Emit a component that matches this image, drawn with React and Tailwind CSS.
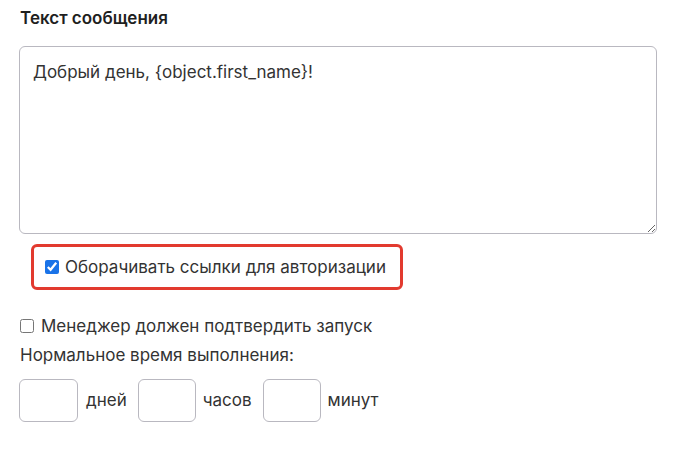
import React from "react";

export default function App() {
  return (
    <div className="w-[678px] h-[457px] bg-white pl-[19px] pr-[21px] pt-[7px] text-[#333333]" style={{ fontFamily: "Inter, 'Noto Sans', sans-serif" }}>
      <div className="text-[17px] font-semibold text-[#1f1f1f] leading-[22px] pl-[1px]">Текст сообщения</div>
      <textarea
        className="mt-[17px] block w-[638px] h-[188px] border border-[#b9b8c0] rounded-[6px] px-[13px] py-[13px] text-[17px] leading-[24px] text-[#333333] resize-y outline-none"
        style={{ fontFamily: "Inter, 'Noto Sans', sans-serif" }}
        defaultValue="Добрый день, {object.first_name}!"
      />
      <div className="mt-[10px] ml-[12px] w-[372px] h-[46px] border-[3px] border-[#e23a2f] rounded-[6px] flex items-center pl-[11px]">
        <input type="checkbox" defaultChecked className="w-[14px] h-[14px] m-0 accent-[#1a73e8]" />
        <span className="ml-[6px] text-[17px] leading-[20px]">Оборачивать ссылки для авторизации</span>
      </div>
      <div className="mt-[26px] flex items-center pl-[1px]">
        <input type="checkbox" className="w-[14px] h-[14px] m-0" />
        <span className="ml-[7px] text-[17px] leading-[20px]">Менеджер должен подтвердить запуск</span>
      </div>
      <div className="mt-[9px] text-[17px] leading-[20px] pl-[1px]">Нормальное время выполнения:</div>
      <div className="mt-[14px] flex items-center">
        <input type="text" className="w-[59px] h-[43px] border border-[#b9b8c0] rounded-[6px] outline-none" />
        <span className="ml-[8px] text-[17px] mr-[11px]">дней</span>
        <input type="text" className="w-[58px] h-[43px] border border-[#b9b8c0] rounded-[6px] outline-none" />
        <span className="ml-[7px] text-[17px] mr-[11px]">часов</span>
        <input type="text" className="w-[58px] h-[43px] border border-[#b9b8c0] rounded-[6px] outline-none" />
        <span className="ml-[7px] text-[17px]">минут</span>
      </div>
    </div>
  );
}
